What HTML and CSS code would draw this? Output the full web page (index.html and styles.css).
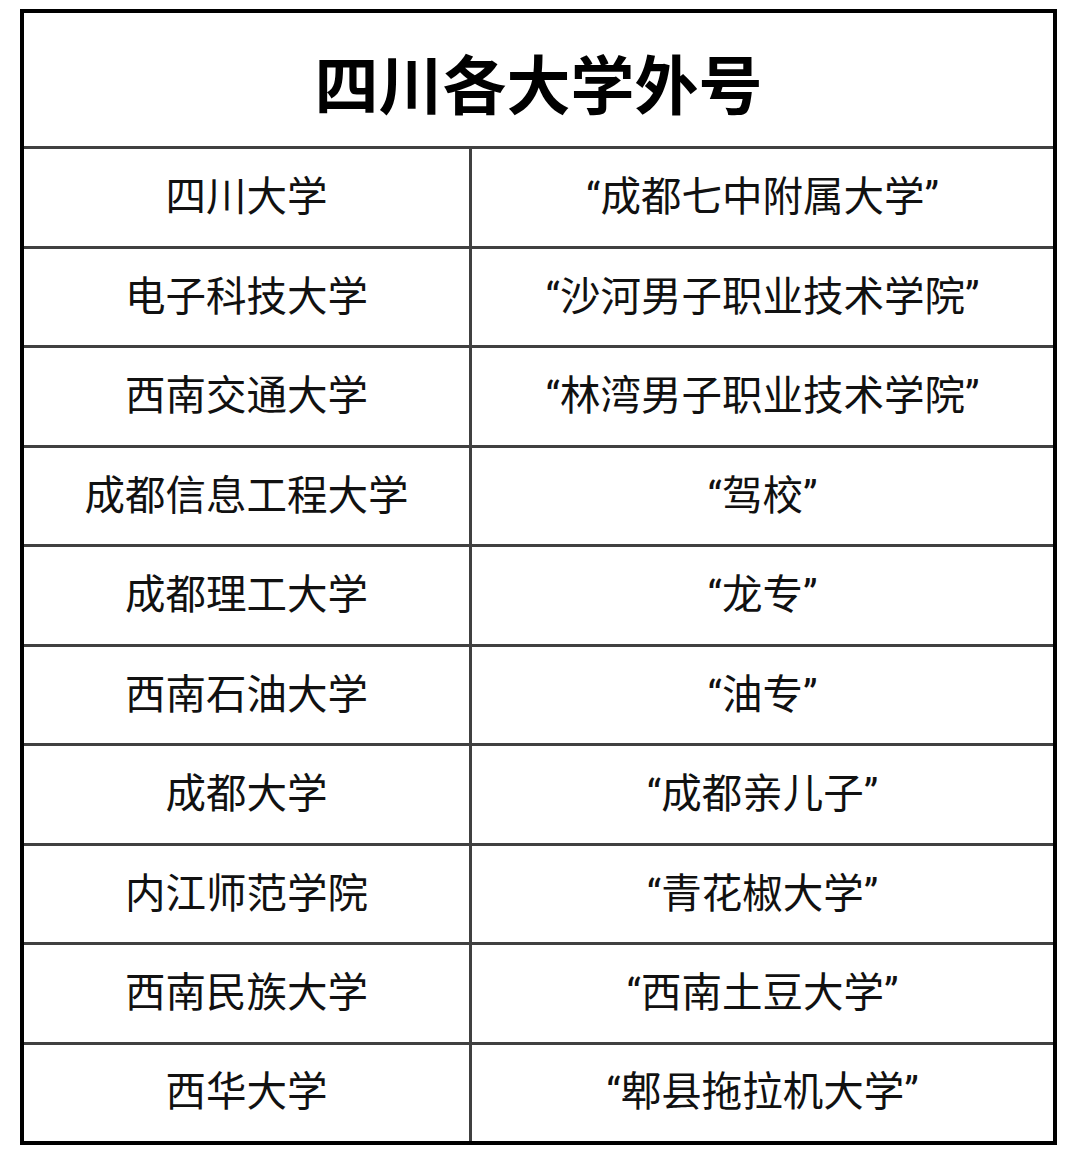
FILE: index.html
```html
<!DOCTYPE html>
<html lang="zh-CN">
<head>
<meta charset="utf-8">
<title>四川各大学外号</title>
<link rel="stylesheet" href="styles.css">
</head>
<body>
<div class="sheet">
  <div class="title">四川各大学外号</div>
  <div class="row"><div class="cell name">四川大学</div><div class="cell nick">“成都七中附属大学”</div></div>
  <div class="row"><div class="cell name">电子科技大学</div><div class="cell nick">“沙河男子职业技术学院”</div></div>
  <div class="row"><div class="cell name">西南交通大学</div><div class="cell nick">“林湾男子职业技术学院”</div></div>
  <div class="row"><div class="cell name">成都信息工程大学</div><div class="cell nick">“驾校”</div></div>
  <div class="row"><div class="cell name">成都理工大学</div><div class="cell nick">“龙专”</div></div>
  <div class="row"><div class="cell name">西南石油大学</div><div class="cell nick">“油专”</div></div>
  <div class="row"><div class="cell name">成都大学</div><div class="cell nick">“成都亲儿子”</div></div>
  <div class="row"><div class="cell name">内江师范学院</div><div class="cell nick">“青花椒大学”</div></div>
  <div class="row"><div class="cell name">西南民族大学</div><div class="cell nick">“西南土豆大学”</div></div>
  <div class="row last"><div class="cell name">西华大学</div><div class="cell nick">“郫县拖拉机大学”</div></div>
</div>
</body>
</html>
```
FILE: styles.css
```css
* { box-sizing: border-box; }
html, body { margin: 0; padding: 0; background: #ffffff; }
body {
  font-family: Roboto, "Noto Sans CJK SC", sans-serif;
  color: #111111;
}
.sheet {
  margin: 9px 0 0 20px;
  width: 1037px;
  border: 4px solid #000000;
  background: #ffffff;
}
.title {
  height: 136px;
  border-bottom: 3px solid #404040;
  display: flex;
  align-items: center;
  justify-content: center;
  font-size: 64px;
  font-weight: 700;
  color: #000000;
  padding-top: 2px;
}
.row {
  display: grid;
  grid-template-columns: 448px 1fr;
  height: 99.5px;
  border-bottom: 3px solid #404040;
}
.row.last {
  height: 96px;
  border-bottom: none;
}
.cell {
  display: flex;
  align-items: center;
  justify-content: center;
  font-size: 40.5px;
  line-height: 1;
}
.name {
  border-right: 3px solid #404040;
}
```
